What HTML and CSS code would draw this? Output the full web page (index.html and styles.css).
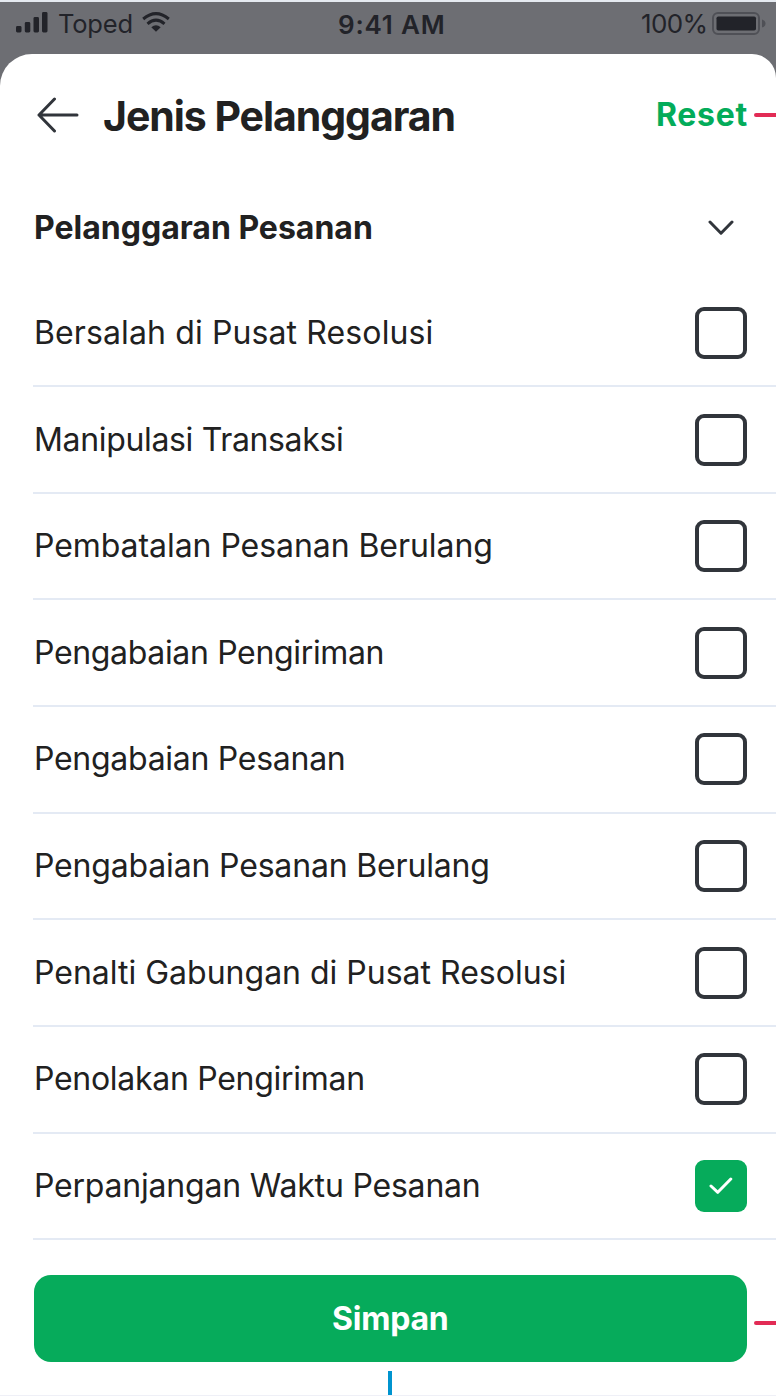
FILE: index.html
```html
<!DOCTYPE html>
<html lang="id">
<head>
<meta charset="utf-8">
<title>Jenis Pelanggaran</title>
<link rel="stylesheet" href="styles.css">
</head>
<body>
<div class="screen">
  <div class="status">
    <div class="carrier">
      <svg width="32" height="22" viewBox="0 0 32 22" fill="#222329"><rect x="0" y="14" width="5.5" height="6.5" rx="1.4"/><rect x="8.8" y="10" width="5.5" height="10.500" rx="1.4"/><rect x="17.500" y="5" width="5.500" height="15.500" rx="1.4"/><rect x="26" y="0" width="5.500" height="20.500" rx="1.4"/></svg>
      <span class="network">Toped</span>
      <svg class="wifi" width="28" height="20" viewBox="0 0 28 20"><g fill="none" stroke="#222329" stroke-width="3"><path d="M1.200 7Q14-3.800 26.800 7"/><path d="M5.500 11.800Q14 4.500 22.500 11.800"/></g><path d="M9.300 15.200Q14 11.500 18.700 15.200L14 19.800Z" fill="#222329"/></svg>
    </div>
    <span class="clock">9:41 AM</span>
    <div class="power">
      <span class="percent">100%</span>
      <svg width="55" height="24" viewBox="0 0 55 24"><rect x="1" y="1" width="46" height="21" rx="5" fill="none" stroke="#4f5056" stroke-width="2"/><rect x="4.500" y="4.500" width="39.500" height="14" rx="1.800" fill="#222329"/><path d="M50 7.500Q53.500 8.500 53.500 11.500T50 15.500Z" fill="#4f5056"/></svg>
    </div>
  </div>
  <main class="sheet">
    <header class="header">
      <svg class="back" width="42" height="36" viewBox="0 0 42 36"><path d="M17.500 2L2 18L17.500 34M2 18H40" fill="none" stroke="#31353b" stroke-width="3" stroke-linecap="round" stroke-linejoin="round"/></svg>
      <h1 class="title">Jenis Pelanggaran</h1>
      <span class="reset">Reset</span>
      <span class="marker"></span>
    </header>
    <section class="group">
      <h2 class="group-title">Pelanggaran Pesanan</h2>
      <svg class="chevron" width="26" height="16" viewBox="0 0 26 16"><path d="M2 2L13 13.200L24 2" fill="none" stroke="#31353b" stroke-width="3" stroke-linecap="round" stroke-linejoin="round"/></svg>
    </section>
    <ul class="list">
      <li class="row"><span class="label l1">Bersalah di Pusat Resolusi</span><span class="box"></span></li>
      <li class="row"><span class="label l2">Manipulasi Transaksi</span><span class="box"></span></li>
      <li class="row"><span class="label l3">Pembatalan Pesanan Berulang</span><span class="box"></span></li>
      <li class="row"><span class="label l4">Pengabaian Pengiriman</span><span class="box"></span></li>
      <li class="row"><span class="label l5">Pengabaian Pesanan</span><span class="box"></span></li>
      <li class="row"><span class="label l6">Pengabaian Pesanan Berulang</span><span class="box"></span></li>
      <li class="row"><span class="label l7">Penalti Gabungan di Pusat Resolusi</span><span class="box"></span></li>
      <li class="row"><span class="label l8">Penolakan Pengiriman</span><span class="box"></span></li>
      <li class="row"><span class="label l9">Perpanjangan Waktu Pesanan</span><span class="box checked"><svg width="24" height="18" viewBox="0 0 24 18"><path d="M2 9L8.800 15.300L21.800 2" fill="none" stroke="#fff" stroke-width="3" stroke-linecap="round" stroke-linejoin="round"/></svg></span></li>
    </ul>
    <div class="actions">
      <div class="save"><span class="save-text">Simpan</span></div>
      <span class="marker"></span>
    </div>
    <div class="pointer"></div>
  </main>
</div>
</body>
</html>
```
FILE: styles.css
```css
* { box-sizing: border-box; }
body { margin: 0; font-family: Inter, sans-serif; color: #212121; background: #fff; }
h1, h2, ul { margin: 0; padding: 0; }
svg { display: block; flex: none; }
.screen { width: 776px; height: 1396px; overflow: hidden; background: #6d6e73; border-top: 2px solid #e5eaf0; border-bottom: 1px solid #eff0f7; }
.status { height: 52px; display: grid; grid-template-columns: 338px 1fr 135px; align-items: start; color: #222329; white-space: nowrap; }
.carrier { display: flex; padding: 10px 0 0 16px; }
.network { font-size: 25.5px; line-height: 32px; margin: -4px 0 0 10px; width: 74px; letter-spacing: -.2px; }
.wifi { margin-left: 10px; }
.clock { font-size: 26px; line-height: 32px; font-weight: 600; padding-top: 7px; letter-spacing: .8px; }
.power { display: flex; padding-top: 10px; }
.percent { font-size: 26px; line-height: 32px; margin-top: -4px; width: 71px; flex: none; letter-spacing: -.6px; }
.sheet { height: 1341px; background: #fff; border-radius: 32px 24px 0 0; display: flex; flex-direction: column; }
.header { height: 122px; display: flex; align-items: center; padding-left: 37px; white-space: nowrap; flex: none; }
.title { font-size: 41px; line-height: 50px; font-weight: 700; margin-left: 24px; padding-top: 2px; width: 553px; letter-spacing: -1.05px; }
.reset { font-size: 32px; line-height: 40px; font-weight: 700; color: #03ac5a; width: 98px; letter-spacing: .7px; }
.marker { width: 22px; height: 4px; background: #e22b55; border-radius: 2px 0 0 2px; flex: none; }
.group { height: 104.600px; display: flex; align-items: center; justify-content: space-between; padding: 0 42px 0 34px; flex: none; }
.group-title { font-size: 32px; line-height: 40px; font-weight: 700; }
.list { list-style: none; padding-left: 33px; }
.row { height: 106.640px; display: flex; align-items: center; justify-content: space-between; padding-right: 29px; border-bottom: 2px solid #e4eaf4; white-space: nowrap; }
.label { font-size: 32px; line-height: 40px; padding-left: 1px; }
.l1 { letter-spacing: .12px; }
.l2 { letter-spacing: -.34px; }
.l3 { letter-spacing: -.06px; }
.l4 { letter-spacing: -.34px; }
.l5 { letter-spacing: -.28px; }
.l6 { letter-spacing: -.17px; }
.l8 { letter-spacing: -.29px; }
.l9 { letter-spacing: -.2px; }
.box { width: 52px; height: 52px; border: 4px solid #31353b; border-radius: 9px; flex: none; display: flex; align-items: center; justify-content: center; }
.checked { border: 0; background: #06ab5b; }
.actions { display: flex; align-items: center; padding: 35px 0 0 33.500px; flex: none; }
.actions .marker { margin-top: 9px; }
.save { width: 713.500px; height: 87px; border-radius: 17px; background: #06ab5b; display: flex; align-items: center; justify-content: center; color: #fff; margin-right: 7px; flex: none; }
.save-text { font-size: 32px; line-height: 40px; font-weight: 700; letter-spacing: -.2px; }
.pointer { width: 4px; height: 26px; margin: 9px 0 0 388px; background: #0094cf; flex: none; }
```
